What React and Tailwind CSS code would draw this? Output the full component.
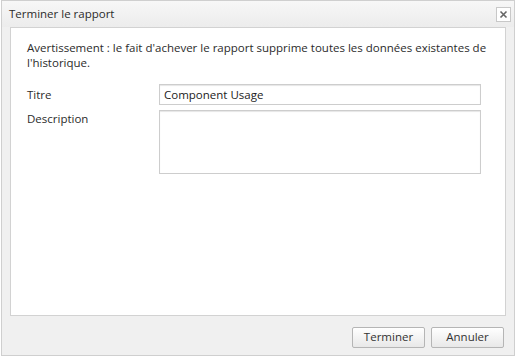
export default function App() {
  return (
    <div className="w-[516px] h-[357px] bg-white overflow-hidden" style={{ fontFamily: '"Open Sans", "Noto Sans", sans-serif' }}>
      <div className="h-[356px] mx-[1px] border border-[#cfcfcf] bg-[#f0f0f0] flex flex-col">
        {/* Title bar */}
        <div className="h-[26px] flex items-center justify-between pl-[7px] pr-[3px] bg-gradient-to-b from-[#f7f7f7] to-[#ececec]">
          <span className="text-[11.5px] text-[#2b2b2b]">Terminer le rapport</span>
          <button className="w-[15px] h-[15px] border border-[#c8c8c8] bg-white flex items-center justify-center">
            <svg width="9" height="9" viewBox="0 0 9 9">
              <path d="M1.5 1.5 L7.5 7.5 M7.5 1.5 L1.5 7.5" stroke="#666" strokeWidth="1.6" />
            </svg>
          </button>
        </div>

        {/* Body */}
        <div className="mx-[8px] h-[289px] border border-[#d2d2d2] bg-white px-[16px] pt-[12px]">
          <p className="text-[11.5px] leading-[15px] text-[#2b2b2b]">
            Avertissement : le fait d'achever le rapport supprime toutes les données existantes de l'historique.
          </p>
          <div className="mt-[14px] flex flex-col gap-[5px]">
            <div className="flex items-center">
              <label className="w-[132px] text-[11.5px] text-[#2b2b2b]">Titre</label>
              <div className="w-[322px] h-[21px] border border-[#cdcdcd] shadow-[inset_0_1px_1px_#e6e6e6] px-[4px] flex items-center text-[11.5px] text-[#222]">
                Component Usage
              </div>
            </div>
            <div className="flex items-start">
              <label className="w-[132px] text-[11.5px] text-[#2b2b2b]">Description</label>
              <div className="w-[322px] h-[64px] border border-[#cdcdcd] shadow-[inset_0_1px_1px_#e6e6e6]" />
            </div>
          </div>
        </div>

        {/* Footer */}
        <div className="flex-1 flex items-center justify-end gap-[6px] pr-[10px] pt-[3px]">
          <button className="w-[73px] h-[21px] border border-[#b5b5b5] rounded-[2px] bg-gradient-to-b from-white to-[#e8e8e8] text-[11.5px] text-[#333]">
            Terminer
          </button>
          <button className="w-[73px] h-[21px] border border-[#b5b5b5] rounded-[2px] bg-gradient-to-b from-white to-[#e8e8e8] text-[11.5px] text-[#333]">
            Annuler
          </button>
        </div>
      </div>
    </div>
  );
}
